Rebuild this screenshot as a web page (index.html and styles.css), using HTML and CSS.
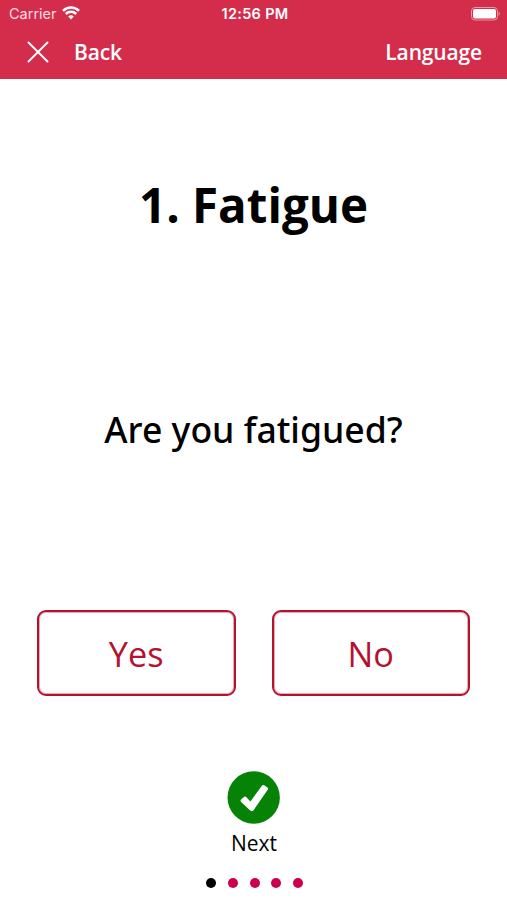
FILE: index.html
```html
<!DOCTYPE html>
<html lang="en">
<head>
    <meta charset="UTF-8">
    <meta name="viewport" content="width=device-width, initial-scale=1.0">
    <title>Fatigue</title>
    <link rel="stylesheet" href="styles.css">
</head>
<body>
    <header class="header">
        <div class="status-bar">
            <div class="carrier">
                <span>Carrier</span>
                <svg class="wifi" viewBox="0 0 18 14" width="18" height="14">
                    <path d="M1 4.8 A11.6 11.6 0 0 1 17 4.8" />
                    <path d="M3.8 8 A7.4 7.4 0 0 1 14.2 8" />
                    <path class="wifi-dot" d="M6.2 10.6 A4 4 0 0 1 11.8 10.6 L9 13.5 Z" />
                </svg>
            </div>
            <div class="clock">12:56 PM</div>
            <svg class="battery" viewBox="0 0 30 14" width="30" height="14">
                <rect class="battery-case" x="0.5" y="0.5" width="26" height="12.5" rx="3.5" />
                <rect class="battery-level" x="2" y="2" width="23" height="9.5" rx="2" />
                <path class="battery-tip" d="M27.6 4.5 Q30 6.7 27.6 9 Z" />
            </svg>
        </div>
        <nav class="nav-bar">
            <svg class="close" viewBox="0 0 22 22" width="22" height="22">
                <path d="M1.5 1.5 L20.5 20.5 M20.5 1.5 L1.5 20.5" />
            </svg>
            <span class="back">Back</span>
            <span class="language">Language</span>
        </nav>
    </header>

    <main class="question-page">
        <h1>1. Fatigue</h1>
        <p class="question">Are you fatigued?</p>

        <div class="answers">
            <button class="answer">Yes</button>
            <button class="answer">No</button>
        </div>

        <div class="next">
            <svg class="check" viewBox="0 0 53 53" width="53" height="53">
                <circle cx="26.7" cy="26.5" r="26.2" />
                <path d="M14.1 28.6 L17.1 25.8 Q18.2 25 19.2 26 L23.4 30.4 L35.1 14.6 Q36.1 13.5 37.2 14.3 L40.5 16.6 Q41.5 17.5 40.7 18.7 L26.6 39.2 Q25.1 41.1 23.2 39.5 L14.1 30.9 Q13 29.7 14.1 28.6 Z" />
            </svg>
            <span>Next</span>
        </div>

        <div class="dots">
            <span class="dot active"></span>
            <span class="dot"></span>
            <span class="dot"></span>
            <span class="dot"></span>
            <span class="dot"></span>
        </div>
    </main>
</body>
</html>
```
FILE: styles.css
```css
* {
    box-sizing: border-box;
}
body {
    margin: 0;
    height: 900px;
    background-color: #fff;
    color: #000;
    font-family: "Open Sans", "Noto Sans", sans-serif;
}

/* header */
.header {
    height: 79px;
    background-color: #d42d4c;
    color: #fff;
}
.status-bar {
    display: grid;
    grid-template-columns: 1fr auto 1fr;
    align-items: center;
    height: 27px;
    padding: 0 6px 0 9px;
    font-family: Inter, sans-serif;
    font-size: 14.5px;
}
.carrier {
    display: flex;
    align-items: center;
    gap: 5px;
    color: #fbdde2;
}
.wifi {
    margin-top: -2px;
    fill: none;
    stroke: #fff;
    stroke-width: 2.5;
}
.wifi-dot {
    fill: #fff;
    stroke: none;
}
.clock {
    font-weight: 600;
    letter-spacing: 0.3px;
}
.battery {
    justify-self: end;
}
.battery-case {
    fill: none;
    stroke: #ea96a5;
}
.battery-level {
    fill: #fff;
}
.battery-tip {
    fill: #ea96a5;
}
.nav-bar {
    display: flex;
    align-items: center;
    height: 50px;
    padding: 0 25px 0 27px;
    font-size: 21px;
    font-weight: 600;
    letter-spacing: -0.15px;
}
.close {
    margin-right: 25px;
    fill: none;
    stroke: #fff;
    stroke-width: 1.9;
    stroke-linecap: round;
}
.back, .language {
    margin-top: -1px;
}
.language {
    margin-left: auto;
}

/* question */
.question-page {
    display: flex;
    flex-direction: column;
    align-items: center;
}
h1 {
    margin: 92px 0 0;
    font-size: 47.5px;
    line-height: 68px;
    font-weight: 700;
}
.question {
    margin: 165px 0 0;
    font-family: "Noto Sans", sans-serif;
    font-size: 35.6px;
    line-height: 50px;
    font-weight: 500;
}
.answers {
    display: grid;
    grid-template-columns: 1fr 1fr;
    gap: 36px;
    width: 433px;
    margin-top: 156px;
}
.answer {
    height: 86px;
    padding: 1px 0 0;
    border: 2px solid #b5122f;
    border-radius: 9px;
    box-shadow: inset 0 0 0 1px rgba(181, 18, 47, 0.35);
    background-color: #fff;
    color: #b5122f;
    font-family: inherit;
    font-size: 34.3px;
}
.next {
    display: flex;
    flex-direction: column;
    align-items: center;
    margin-top: 75px;
    font-size: 21px;
    line-height: 30px;
}
.next span {
    padding-left: 1px;
}
.check {
    margin-bottom: 4px;
    fill: #068306;
}
.check path {
    fill: #fff;
}
.dots {
    display: flex;
    gap: 11.6px;
    margin-top: 20px;
    padding-left: 2px;
}
.dot {
    width: 10px;
    height: 10px;
    border-radius: 50%;
    background-color: #cc004e;
}
.dot.active {
    background-color: #000;
}
```
